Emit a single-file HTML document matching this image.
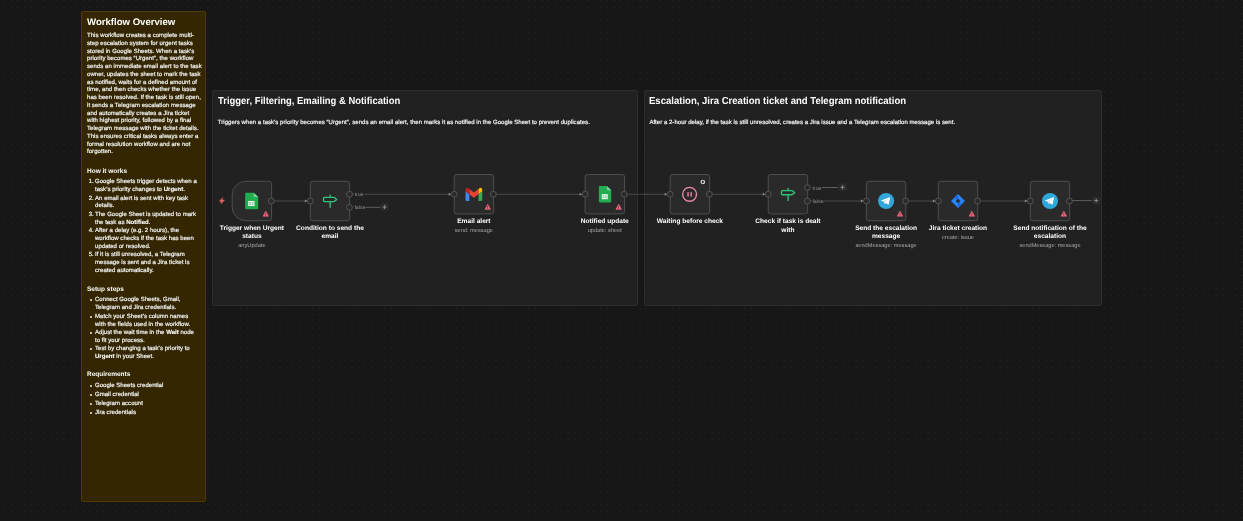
<!DOCTYPE html><html><head><meta charset="utf-8"><style>
html,body{margin:0;padding:0}
body{width:1243px;height:521px;overflow:hidden;position:relative;background-color:#171717;
background-image:radial-gradient(circle, #282828 0.400px, rgba(0,0,0,0) 0.800px);background-size:6.547px 6.547px;background-position:1.760px -2.650px;
font-family:"Liberation Sans",sans-serif;color:#fff;text-rendering:geometricPrecision}
div{box-sizing:border-box}
.p,.h1,.h3,.l,.s,.t{margin-top:0.900px}
#c{position:absolute;left:0;top:0;width:1243px;height:521px;will-change:transform;}
.st{position:absolute;border:1px solid;border-radius:2px}
.h1{position:absolute;font-weight:bold;font-size:9.600px;line-height:12px;white-space:nowrap;color:#fff}
.h3{position:absolute;font-weight:bold;font-size:6.500px;line-height:8px;white-space:nowrap;color:#fff}
.p{position:absolute;font-size:6px;letter-spacing:0.055px;line-height:7.770px;white-space:nowrap;color:#f4f4f4;-webkit-text-stroke:0.200px #f4f4f4}
.p b{-webkit-text-stroke:0.100px #fff;color:#fff}
.li{letter-spacing:0.040px}
.sp{letter-spacing:0.050px}
.h1s{font-size:10.200px;transform:scaleX(0.925);transform-origin:0 0}
.b{position:absolute;width:2.200px;height:2.200px;border-radius:50%;background:#f0f0f0}
.n{position:absolute;width:39.4px;height:39.4px;background:#2a2a2a;border:0.900px solid #525252}
.h{position:absolute;width:6.700px;height:6.700px;border-radius:50%;background:#2a2a2a;border:0.850px solid #585858}
.l{position:absolute;width:120px;text-align:center;font-weight:bold;font-size:6.600px;line-height:8.100px;color:#fff;white-space:nowrap}
.s{position:absolute;width:120px;text-align:center;font-size:5.650px;line-height:7px;color:#a8a8a8;white-space:nowrap}
.t{position:absolute;font-size:5.300px;line-height:7px;color:#8c8c8c;background:#212121;padding:0 0.300px}
</style></head><body><div id="c">
<div class="st" style="left:81px;top:11px;width:125px;height:491px;background:#332600;border-color:#503a00">
<div class="h1" style="left:5px;top:4.300px">Workflow Overview</div>
<div class="p" style="left:5px;top:20.100px">This workflow creates a complete multi-<br>step escalation system for urgent tasks<br>stored in Google Sheets. When a task&#8217;s<br>priority becomes &#8220;Urgent&#8221;, the workflow<br>sends an immediate email alert to the task<br>owner, updates the sheet to mark the task<br>as notified, waits for a defined amount of<br>time, and then checks whether the issue<br>has been resolved. If the task is still open,<br>it sends a Telegram escalation message<br>and automatically creates a Jira ticket<br>with highest priority, followed by a final<br>Telegram message with the ticket details.<br>This ensures critical tasks always enter a<br>formal resolution workflow and are not<br>forgotten.</div>
<div class="h3" style="left:5px;top:154.750px">How it works</div>
<div class="p" style="left:6.700px;top:166.4px">1.</div>
<div class="p li" style="left:13px;top:166.4px">Google Sheets trigger detects when a<br>task&#8217;s priority changes to <b>Urgent</b>.</div>
<div class="p" style="left:6.700px;top:182.7px">2.</div>
<div class="p li" style="left:13px;top:182.7px">An email alert is sent with key task<br>details.</div>
<div class="p" style="left:6.700px;top:199.0px">3.</div>
<div class="p li" style="left:13px;top:199.0px">The Google Sheet is updated to mark<br>the task as <b>Notified</b>.</div>
<div class="p" style="left:6.700px;top:215.3px">4.</div>
<div class="p li" style="left:13px;top:215.3px">After a delay (e.g. 2 hours), the<br>workflow checks if the task has been<br>updated or resolved.</div>
<div class="p" style="left:6.700px;top:239.4px">5.</div>
<div class="p li" style="left:13px;top:239.4px">If it is still unresolved, a Telegram<br>message is sent and a Jira ticket is<br>created automatically.</div>
<div class="h3" style="left:5px;top:272.750px">Setup steps</div>
<div class="b" style="left:8.200px;top:287.3px"></div>
<div class="p li" style="left:13px;top:284.6px">Connect Google Sheets, Gmail,<br>Telegram and Jira credentials.</div>
<div class="b" style="left:8.200px;top:303.59999999999997px"></div>
<div class="p li" style="left:13px;top:300.9px">Match your Sheet&#8217;s column names<br>with the fields used in the workflow.</div>
<div class="b" style="left:8.200px;top:319.9px"></div>
<div class="p li" style="left:13px;top:317.2px">Adjust the wait time in the <b>Wait</b> node<br>to fit your process.</div>
<div class="b" style="left:8.200px;top:336.2px"></div>
<div class="p li" style="left:13px;top:333.5px">Test by changing a task&#8217;s priority to<br><b>Urgent</b> in your Sheet.</div>
<div class="h3" style="left:5px;top:358.500px">Requirements</div>
<div class="b" style="left:8.200px;top:373.3px"></div>
<div class="p li" style="left:13px;top:370.6px">Google Sheets credential</div>
<div class="b" style="left:8.200px;top:382.27000000000004px"></div>
<div class="p li" style="left:13px;top:379.57000000000005px">Gmail credential</div>
<div class="b" style="left:8.200px;top:391.24px"></div>
<div class="p li" style="left:13px;top:388.54px">Telegram account</div>
<div class="b" style="left:8.200px;top:400.21000000000004px"></div>
<div class="p li" style="left:13px;top:397.51000000000005px">Jira credentials</div>
</div>
<div class="st" style="left:212px;top:90px;width:426px;height:216px;background:#212121;border-color:#2e2e2e">
<div class="h1 h1s" style="left:4.600px;top:4px">Trigger, Filtering, Emailing &amp; Notification</div>
<div class="p sp" style="left:4.800px;top:27.700px;letter-spacing:0.042px">Triggers when a task&#8217;s priority becomes &#8220;Urgent&#8221;, sends an email alert, then marks it as notified in the Google Sheet to prevent duplicates.</div>
</div>
<div class="st" style="left:644px;top:90px;width:458px;height:216px;background:#212121;border-color:#2e2e2e">
<div class="h1 h1s" style="left:4.200px;top:4px;transform:scaleX(0.937)">Escalation, Jira Creation ticket and Telegram notification</div>
<div class="p sp" style="left:4.400px;top:27.700px;letter-spacing:0.032px">After a 2-hour delay, if the task is still unresolved, creates a Jira issue and a Telegram escalation message is sent.</div>
</div>
<svg style="position:absolute;left:0;top:0" width="1243" height="521" viewBox="0 0 1243 521"><path d="M271.6 201.0H310.3" stroke="#4a4a4a" stroke-width="1.1" fill="none"/><path d="M304.8 199.45 L307.2 201.0 L304.8 202.55 Z" fill="#8c8c8c"/>
<path d="M349.8 194.2H454.2" stroke="#4a4a4a" stroke-width="1.1" fill="none"/><path d="M448.7 192.64999999999998 L451.09999999999997 194.2 L448.7 195.75 Z" fill="#8c8c8c"/>
<path d="M360.5 207.3H380.5" stroke="#666666" stroke-width="0.9" fill="none"/>
<path d="M493.8 194.2H585.1" stroke="#4a4a4a" stroke-width="1.1" fill="none"/><path d="M579.6 192.64999999999998 L582.0 194.2 L579.6 195.75 Z" fill="#8c8c8c"/>
<path d="M624.8 194.2H670.2" stroke="#4a4a4a" stroke-width="1.1" fill="none"/><path d="M664.7 192.64999999999998 L667.1 194.2 L664.7 195.75 Z" fill="#8c8c8c"/>
<path d="M709.9 194.2H768.25" stroke="#4a4a4a" stroke-width="1.1" fill="none"/><path d="M762.75 192.64999999999998 L765.15 194.2 L762.75 195.75 Z" fill="#8c8c8c"/>
<path d="M822 187.5H838.2" stroke="#666666" stroke-width="0.9" fill="none"/>
<path d="M807.8 201.0H866.4" stroke="#4a4a4a" stroke-width="1.1" fill="none"/><path d="M860.9 199.45 L863.3 201.0 L860.9 202.55 Z" fill="#8c8c8c"/>
<path d="M905.8 201.0H938.3" stroke="#4a4a4a" stroke-width="1.1" fill="none"/><path d="M932.8 199.45 L935.1999999999999 201.0 L932.8 202.55 Z" fill="#8c8c8c"/>
<path d="M977.7 201.0H1030.3" stroke="#4a4a4a" stroke-width="1.1" fill="none"/><path d="M1024.8 199.45 L1027.2 201.0 L1024.8 202.55 Z" fill="#8c8c8c"/>
<path d="M1069.8 200.6H1091.8" stroke="#666666" stroke-width="0.9" fill="none"/>
<rect x="380.6" y="203.1" width="8" height="8" rx="2" fill="#2b2b2b"/><path d="M384.6 205.1V209.1M382.6 207.1H386.6" stroke="#8e8e8e" stroke-width="0.950" fill="none"/>
<rect x="838.5" y="183.3" width="8" height="8" rx="2" fill="#2b2b2b"/><path d="M842.5 185.3V189.3M840.5 187.3H844.5" stroke="#8e8e8e" stroke-width="0.950" fill="none"/>
<rect x="1092.2" y="196.6" width="8" height="8" rx="2" fill="#2b2b2b"/><path d="M1096.2 198.6V202.6M1094.2 200.6H1098.2" stroke="#8e8e8e" stroke-width="0.950" fill="none"/>
<g transform="translate(218.6 197.3) scale(0.27499999999999997 0.2916666666666667)"><path d="M14.500 1 L2.500 14.500 H10.500 L8.500 23 L21.500 9.500 H13 Z" fill="#f0635a" stroke="#f0635a" stroke-width="1.500" stroke-linejoin="round"/></g>
<path d="M245.7 181.3 H269.29999999999995 a2.3 2.3 0 0 1 2.3 2.3 V218.4 a2.3 2.3 0 0 1 -2.3 2.3 H245.7 a13.5 13.5 0 0 1 -13.5 -13.5 V194.8 a13.5 13.5 0 0 1 13.5 -13.5 Z" fill="#2a2a2a" stroke="#525252" stroke-width="0.900"/><g transform="translate(245.2 192.7) scale(0.2826086956521739 0.2661290322580645)"><path d="M4 0 H30 L46 16 V58 a4 4 0 0 1 -4 4 H4 a4 4 0 0 1 -4 -4 V4 a4 4 0 0 1 4 -4 Z" fill="#24ac50"/><path d="M30 0 L46 16 H34 a4 4 0 0 1 -4 -4 Z" fill="#7fd09b"/><path d="M10.800 31 H33 V50 H10.800 Z" fill="#f4fbf6"/><path d="M14.200 35 H20.300 V46.400 H14.200 Z M23.500 35 H29.600 V46.400 H23.500 Z" fill="#7fcf9a"/><path d="M14.200 39.900 H29.600 V41.500 H14.200 Z" fill="#dff3e6"/></g><g transform="translate(262.75 210.60000000000002) scale(0.25066666666666665 0.26666666666666666)"><path d="M12 1.800 L22.800 20.800 H1.200 Z" fill="#f0677e" stroke="#f0677e" stroke-width="2.400" stroke-linejoin="round"/><rect x="10.700" y="8" width="2.600" height="6.800" fill="#3a2026"/><rect x="10.700" y="16.600" width="2.600" height="2.600" fill="#3a2026"/></g><circle cx="271.4" cy="201.0" r="2.950" fill="#2a2a2a" stroke="#5a5a5a" stroke-width="0.850"/>
<rect x="310.3" y="181.3" width="39.4" height="39.4" rx="2.3" fill="#2a2a2a" stroke="#525252" stroke-width="0.900"/><g transform="translate(330.15 201.1)" fill="none" stroke="#33c27c" stroke-width="1.350" stroke-linecap="round" stroke-linejoin="round"><path d="M0 -6 V-3.750 M0 0.450 V6.200"/><path d="M-5.700 -3.750 H3.700 a1 1 0 0 1 0.650 0.250 L6.600 -1.650 L4.350 0.200 a1 1 0 0 1 -0.650 0.250 H-5.700 a0.900 0.900 0 0 1 -0.900 -0.900 V-2.850 a0.900 0.900 0 0 1 0.900 -0.900 Z"/></g><circle cx="310.3" cy="201.0" r="2.950" fill="#2a2a2a" stroke="#5a5a5a" stroke-width="0.850"/><circle cx="349.5" cy="194.2" r="2.950" fill="#2a2a2a" stroke="#5a5a5a" stroke-width="0.850"/><circle cx="349.5" cy="207.35" r="2.950" fill="#2a2a2a" stroke="#5a5a5a" stroke-width="0.850"/>
<rect x="454.2" y="174.5" width="39.4" height="39.4" rx="2.3" fill="#2a2a2a" stroke="#525252" stroke-width="0.900"/><g transform="translate(465.54999999999995 187.79999999999998) scale(0.18977272727272726 0.19999999999999998) translate(-52 -42)"><path fill="#4285f4" d="M58 108h14V74L52 59v43c0 3.320 2.690 6 6 6"/><path fill="#34a853" d="M120 108h14c3.320 0 6-2.690 6-6V59l-20 15"/><path fill="#fbbc04" d="M120 48v26l20-15v-8c0-7.420-8.470-11.650-14.400-7.200"/><path fill="#ea4335" d="M72 74V48l24 18 24-18v26L96 92"/><path fill="#c5221f" d="M52 51v8l20 15V48l-5.600-4.200c-5.940-4.450-14.400-.220-14.400 7.200"/></g><g transform="translate(484.75 203.8) scale(0.25066666666666665 0.26666666666666666)"><path d="M12 1.800 L22.800 20.800 H1.200 Z" fill="#f0677e" stroke="#f0677e" stroke-width="2.400" stroke-linejoin="round"/><rect x="10.700" y="8" width="2.600" height="6.800" fill="#3a2026"/><rect x="10.700" y="16.600" width="2.600" height="2.600" fill="#3a2026"/></g><circle cx="454.2" cy="194.2" r="2.950" fill="#2a2a2a" stroke="#5a5a5a" stroke-width="0.850"/><circle cx="493.4" cy="194.2" r="2.950" fill="#2a2a2a" stroke="#5a5a5a" stroke-width="0.850"/>
<rect x="585.1" y="174.5" width="39.4" height="39.4" rx="2.3" fill="#2a2a2a" stroke="#525252" stroke-width="0.900"/><g transform="translate(598.85 185.89999999999998) scale(0.26956521739130435 0.2661290322580645)"><path d="M4 0 H30 L46 16 V58 a4 4 0 0 1 -4 4 H4 a4 4 0 0 1 -4 -4 V4 a4 4 0 0 1 4 -4 Z" fill="#24ac50"/><path d="M30 0 L46 16 H34 a4 4 0 0 1 -4 -4 Z" fill="#7fd09b"/><path d="M10.800 31 H33 V50 H10.800 Z" fill="#f4fbf6"/><path d="M14.200 35 H20.300 V46.400 H14.200 Z M23.500 35 H29.600 V46.400 H23.500 Z" fill="#7fcf9a"/><path d="M14.200 39.900 H29.600 V41.500 H14.200 Z" fill="#dff3e6"/></g><g transform="translate(615.65 203.8) scale(0.25066666666666665 0.26666666666666666)"><path d="M12 1.800 L22.800 20.800 H1.200 Z" fill="#f0677e" stroke="#f0677e" stroke-width="2.400" stroke-linejoin="round"/><rect x="10.700" y="8" width="2.600" height="6.800" fill="#3a2026"/><rect x="10.700" y="16.600" width="2.600" height="2.600" fill="#3a2026"/></g><circle cx="585.1" cy="194.2" r="2.950" fill="#2a2a2a" stroke="#5a5a5a" stroke-width="0.850"/><circle cx="624.3" cy="194.2" r="2.950" fill="#2a2a2a" stroke="#5a5a5a" stroke-width="0.850"/>
<rect x="670.2" y="174.5" width="39.4" height="39.4" rx="2.3" fill="#2a2a2a" stroke="#525252" stroke-width="0.900"/><g transform="translate(689.6000000000001 194.2)" fill="none" stroke="#f08aa8" stroke-width="1.350" stroke-linecap="round"><circle cx="0" cy="0.100" r="6.950"/><path d="M-1.550 -1.600 V1.800 M1.550 -1.600 V1.800" stroke-width="1.400"/></g><circle cx="670.2" cy="194.2" r="2.950" fill="#2a2a2a" stroke="#5a5a5a" stroke-width="0.850"/><circle cx="709.4" cy="194.2" r="2.950" fill="#2a2a2a" stroke="#5a5a5a" stroke-width="0.850"/><g transform="translate(699.800 178.900)"><circle cx="3" cy="3" r="2.900" fill="#232323"/><circle cx="3" cy="3" r="1.700" fill="none" stroke="#ececec" stroke-width="1.150"/><path d="M3.300 0.300 L3.300 1.700 M2.700 4.300 L2.700 5.700" stroke="#2a2a2a" stroke-width="0.550"/></g>
<rect x="768.25" y="174.5" width="39.4" height="39.4" rx="2.3" fill="#2a2a2a" stroke="#525252" stroke-width="0.900"/><g transform="translate(788.1 194.29999999999998)" fill="none" stroke="#33c27c" stroke-width="1.350" stroke-linecap="round" stroke-linejoin="round"><path d="M0 -6 V-3.750 M0 0.450 V6.200"/><path d="M-5.700 -3.750 H3.700 a1 1 0 0 1 0.650 0.250 L6.600 -1.650 L4.350 0.200 a1 1 0 0 1 -0.650 0.250 H-5.700 a0.900 0.900 0 0 1 -0.900 -0.900 V-2.850 a0.900 0.900 0 0 1 0.900 -0.900 Z"/></g><circle cx="768.25" cy="194.2" r="2.950" fill="#2a2a2a" stroke="#5a5a5a" stroke-width="0.850"/><circle cx="807.4499999999999" cy="187.6" r="2.950" fill="#2a2a2a" stroke="#5a5a5a" stroke-width="0.850"/><circle cx="807.4499999999999" cy="201.0" r="2.950" fill="#2a2a2a" stroke="#5a5a5a" stroke-width="0.850"/>
<rect x="866.4" y="181.3" width="39.4" height="39.4" rx="2.3" fill="#2a2a2a" stroke="#525252" stroke-width="0.900"/><g transform="translate(878.0500000000001 192.95) scale(0.06708333333333334)"><circle cx="120" cy="120" r="120" fill="#2fa7db"/><g transform="translate(0 -7)"><path fill="#c8daea" d="M98 175c-3.900 0-3.200-1.500-4.600-5.200L82 132.200 152.800 88l8.300 2.200-6.900 18.800L98 175z"/><path fill="#a9c9dd" d="M98 175c3 0 4.300-1.400 6-3 2.600-2.500 36-35 36-35l-20.500-5-19 12-2.500 30v1z"/><path fill="#fff" d="M100 144.400l48.400 35.700c5.500 3 9.500 1.500 10.900-5.100L179 82.200c2-8.100-3.100-11.700-8.400-9.300L55 117.500c-7.900 3.200-7.800 7.600-1.400 9.500l29.700 9.300L152 93c3.200-2 6.200-.9 3.800 1.300L100 144.400z"/></g></g><g transform="translate(896.9499999999999 210.60000000000002) scale(0.25066666666666665 0.26666666666666666)"><path d="M12 1.800 L22.800 20.800 H1.200 Z" fill="#f0677e" stroke="#f0677e" stroke-width="2.400" stroke-linejoin="round"/><rect x="10.700" y="8" width="2.600" height="6.800" fill="#3a2026"/><rect x="10.700" y="16.600" width="2.600" height="2.600" fill="#3a2026"/></g><circle cx="866.4" cy="201.0" r="2.950" fill="#2a2a2a" stroke="#5a5a5a" stroke-width="0.850"/><circle cx="905.5999999999999" cy="201.0" r="2.950" fill="#2a2a2a" stroke="#5a5a5a" stroke-width="0.850"/>
<rect x="938.3" y="181.3" width="39.4" height="39.4" rx="2.3" fill="#2a2a2a" stroke="#525252" stroke-width="0.900"/><g transform="translate(950.75 193.75) scale(0.6041666666666666)"><path d="M12 0.500 L23.500 12 L12 23.500 L0.500 12 Z" fill="#2684ff"/><path d="M12 0.500 L6.300 6.200 L12 12 Z" fill="#1c68dc"/><path d="M12 23.500 L17.700 17.800 L12 12 Z" fill="#1c68dc"/><path d="M12 8.300 L15.700 12 L12 15.700 L8.300 12 Z" fill="#2a2a2a"/></g><g transform="translate(968.8499999999999 210.60000000000002) scale(0.25066666666666665 0.26666666666666666)"><path d="M12 1.800 L22.800 20.800 H1.200 Z" fill="#f0677e" stroke="#f0677e" stroke-width="2.400" stroke-linejoin="round"/><rect x="10.700" y="8" width="2.600" height="6.800" fill="#3a2026"/><rect x="10.700" y="16.600" width="2.600" height="2.600" fill="#3a2026"/></g><circle cx="938.3" cy="201.0" r="2.950" fill="#2a2a2a" stroke="#5a5a5a" stroke-width="0.850"/><circle cx="977.4999999999999" cy="201.0" r="2.950" fill="#2a2a2a" stroke="#5a5a5a" stroke-width="0.850"/>
<rect x="1030.3" y="181.3" width="39.4" height="39.4" rx="2.3" fill="#2a2a2a" stroke="#525252" stroke-width="0.900"/><g transform="translate(1041.95 192.95) scale(0.06708333333333334)"><circle cx="120" cy="120" r="120" fill="#2fa7db"/><g transform="translate(0 -7)"><path fill="#c8daea" d="M98 175c-3.900 0-3.200-1.500-4.600-5.200L82 132.200 152.800 88l8.300 2.200-6.900 18.800L98 175z"/><path fill="#a9c9dd" d="M98 175c3 0 4.300-1.400 6-3 2.600-2.500 36-35 36-35l-20.500-5-19 12-2.500 30v1z"/><path fill="#fff" d="M100 144.400l48.400 35.700c5.500 3 9.500 1.500 10.900-5.100L179 82.200c2-8.100-3.100-11.700-8.400-9.300L55 117.500c-7.900 3.200-7.800 7.600-1.400 9.500l29.700 9.300L152 93c3.200-2 6.200-.9 3.800 1.300L100 144.400z"/></g></g><g transform="translate(1060.85 210.60000000000002) scale(0.25066666666666665 0.26666666666666666)"><path d="M12 1.800 L22.800 20.800 H1.200 Z" fill="#f0677e" stroke="#f0677e" stroke-width="2.400" stroke-linejoin="round"/><rect x="10.700" y="8" width="2.600" height="6.800" fill="#3a2026"/><rect x="10.700" y="16.600" width="2.600" height="2.600" fill="#3a2026"/></g><circle cx="1030.3" cy="201.0" r="2.950" fill="#2a2a2a" stroke="#5a5a5a" stroke-width="0.850"/><circle cx="1069.5" cy="201.0" r="2.950" fill="#2a2a2a" stroke="#5a5a5a" stroke-width="0.850"/></svg>
<div class="l" style="left:191.89999999999998px;top:223.75000000000003px;line-height:8.0px">Trigger when Urgent<br>status</div><div class="s" style="left:191.89999999999998px;top:242.0px">anyUpdate</div>
<div class="l" style="left:270.0px;top:223.75000000000003px;line-height:8.0px">Condition to send the<br>email</div><div class="t" style="left:354.1px;top:191.39999999999998px">true</div><div class="t" style="left:354.1px;top:204.54999999999998px">false</div>
<div class="l" style="left:413.9px;top:216.95000000000002px;line-height:8.0px">Email alert</div><div class="s" style="left:413.9px;top:227.1px">send: message</div>
<div class="l" style="left:544.8000000000001px;top:216.95000000000002px;line-height:8.0px">Notified update</div><div class="s" style="left:544.8000000000001px;top:227.1px">update: sheet</div>
<div class="l" style="left:629.9000000000001px;top:216.95000000000002px;line-height:8.0px">Waiting before check</div>
<div class="l" style="left:727.95px;top:216.95000000000002px;line-height:8.9px">Check if task is dealt<br>with</div><div class="t" style="left:812.0999999999999px;top:184.79999999999998px">true</div><div class="t" style="left:812.0999999999999px;top:198.2px">false</div>
<div class="l" style="left:826.1px;top:223.75000000000003px;line-height:8.0px">Send the escalation<br>message</div><div class="s" style="left:826.1px;top:242.0px">sendMessage: message</div>
<div class="l" style="left:898.0px;top:223.75000000000003px;line-height:8.0px">Jira ticket creation</div><div class="s" style="left:898.0px;top:233.9px">create: issue</div>
<div class="l" style="left:990.0px;top:223.75000000000003px;line-height:8.0px">Send notification of the<br>escalation</div><div class="s" style="left:990.0px;top:242.0px">sendMessage: message</div>
</div></body></html>
